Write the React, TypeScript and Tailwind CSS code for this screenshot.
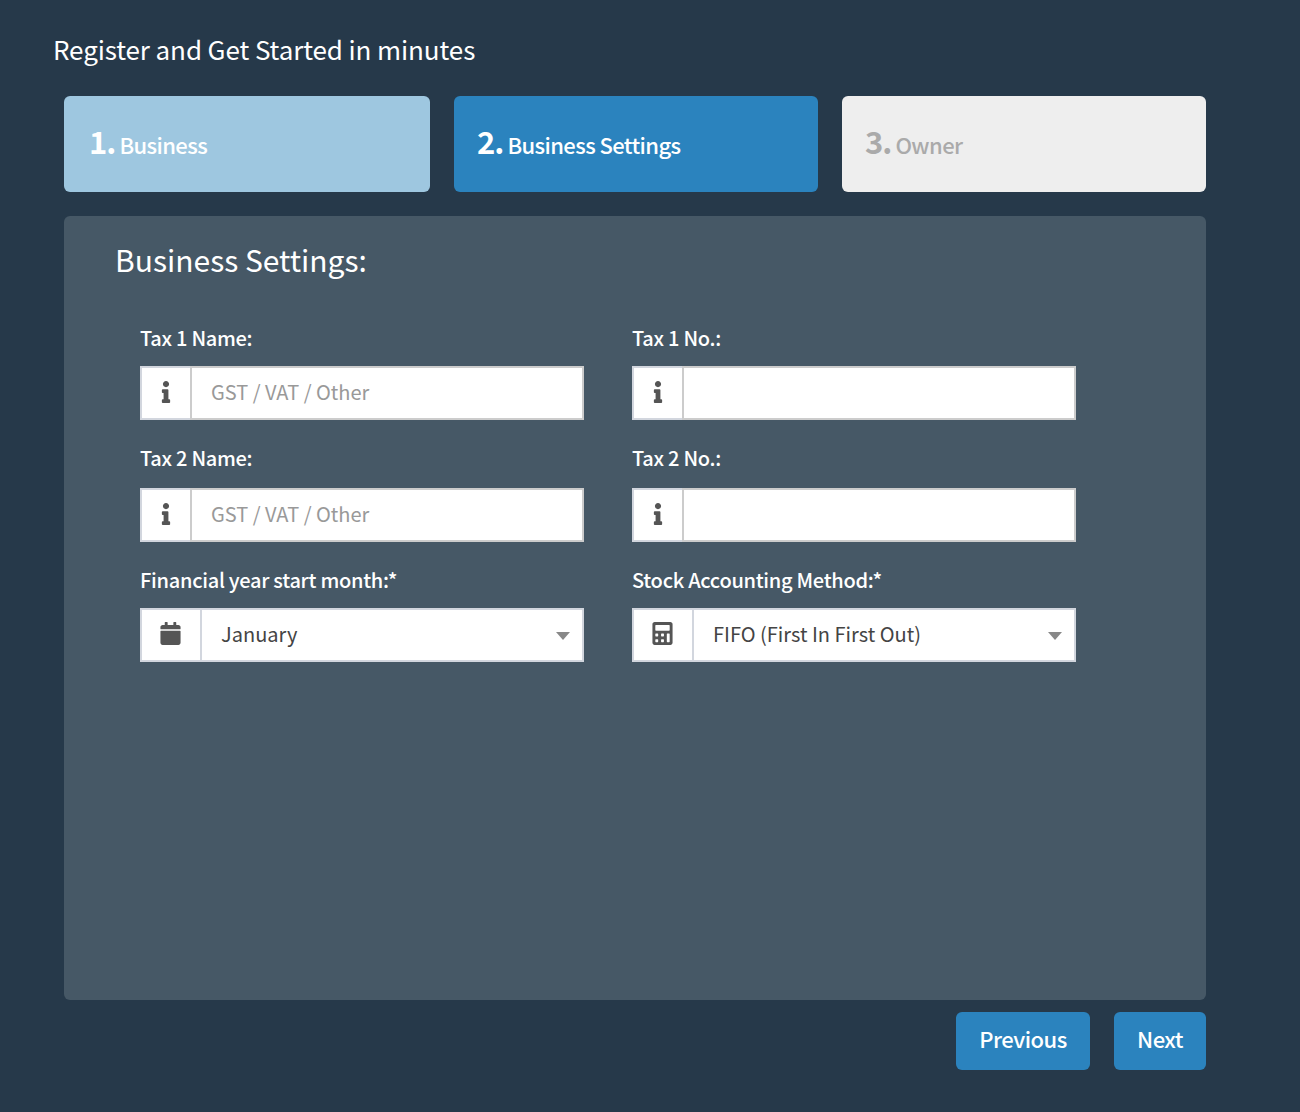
import { FaCalculator, FaCalendar, FaInfo } from 'react-icons/fa';

const font = { fontFamily: '"Noto Sans CJK SC", "Noto Sans", sans-serif' };

function Step({ n, label, className }: { n: string; label: string; className: string }) {
  return (
    <div className={`flex h-24 items-center rounded-md ${className}`}>
      <span className="-mt-[7px] text-[31px] font-semibold leading-none tracking-[-1px]">{n}.</span>
      <span className="ml-1 text-[22px] font-medium leading-none tracking-[-0.6px]">{label}</span>
    </div>
  );
}

function Label({ text, gap }: { text: string; gap: string }) {
  return <label className={`block h-[30px] text-[20px] font-medium leading-[27px] tracking-[-0.28px] text-white ${gap}`}>{text}</label>;
}

function Field({ label, icon, placeholder, gap }: { label: string; icon: React.ReactNode; placeholder?: string; gap: string }) {
  return (
    <div>
      <Label text={label} gap={gap} />
      <div className="flex h-[54px] bg-white">
        <div className="flex w-[50px] items-center justify-center border-y-2 border-l-2 border-[#d2d6de] pb-[2px] text-[#555]">{icon}</div>
        <div className="flex-1 border-2 border-[#cccccc] pl-[19px] text-[20px] leading-[47px] text-[#999]">{placeholder}</div>
      </div>
    </div>
  );
}

function SelectField({ label, icon, value, gap }: { label: string; icon: React.ReactNode; value: string; gap: string }) {
  return (
    <div>
      <Label text={label} gap={gap} />
      <div className="flex h-[54px] items-center border-2 border-[#d2d6de] bg-white">
        <div className="flex h-full w-[60px] items-center justify-center border-r-2 border-[#d2d6de] pb-[3px] pr-[1px] text-[#555]">{icon}</div>
        <div className="flex-1 pb-[2px] pl-[19px] text-[20px] text-[#444]">{value}</div>
        <div className="mr-[12px] mt-0.5 h-0 w-0 border-x-[7px] border-t-[8px] border-x-transparent border-t-[#888]" />
      </div>
    </div>
  );
}

export default function App() {
  return (
    <div className="h-[1112px] w-[1300px] bg-[#26394a] pl-[53px] pr-[94px] pt-[29px]" style={font}>
      <h1 className="h-[40px] text-[26px] leading-[40px] tracking-[-0.1px] text-white">Register and Get Started in minutes</h1>

      <div className="ml-[11px] mt-[27px]">
        <div className="flex gap-6">
          <Step n="1" label="Business" className="w-[366px] bg-[#9ec7e0] pl-[25px] text-white" />
          <Step n="2" label="Business Settings" className="w-[364px] bg-[#2b83be] pl-[23px] text-white" />
          <Step n="3" label="Owner" className="w-[364px] bg-[#eeeeee] pl-[23px] text-[#aaaaaa]" />
        </div>

        <div className="mt-6 h-[784px] rounded-md bg-[#465866] pl-[51px] pt-[19px]">
          <h2 className="h-[48px] text-[30px] leading-[48px] text-white">Business Settings:</h2>
          <div className="ml-[25px] mt-[41px] grid w-[936px] grid-cols-2 gap-x-12 gap-y-6">
            <Field label="Tax 1 Name:" gap="mb-[12px]" icon={<FaInfo size={22} />} placeholder="GST / VAT / Other" />
            <Field label="Tax 1 No.:" gap="mb-[12px]" icon={<FaInfo size={22} />} />
            <Field label="Tax 2 Name:" gap="mb-[14px]" icon={<FaInfo size={22} />} placeholder="GST / VAT / Other" />
            <Field label="Tax 2 No.:" gap="mb-[14px]" icon={<FaInfo size={22} />} />
            <SelectField label="Financial year start month:*" gap="mb-[12px]" icon={<FaCalendar size={23} />} value="January" />
            <SelectField label="Stock Accounting Method:*" gap="mb-[12px]" icon={<FaCalculator size={23} />} value="FIFO (First In First Out)" />
          </div>
        </div>

        <div className="mt-3 flex justify-end gap-6">
          <button className="h-[58px] w-[134px] rounded-md bg-[#2b83be] pb-[5px] text-[22px] font-medium tracking-[-0.5px] text-white">Previous</button>
          <button className="h-[58px] w-[92px] rounded-md bg-[#2b83be] pb-[5px] text-[22px] font-medium tracking-[-0.5px] text-white">Next</button>
        </div>
      </div>
    </div>
  );
}
